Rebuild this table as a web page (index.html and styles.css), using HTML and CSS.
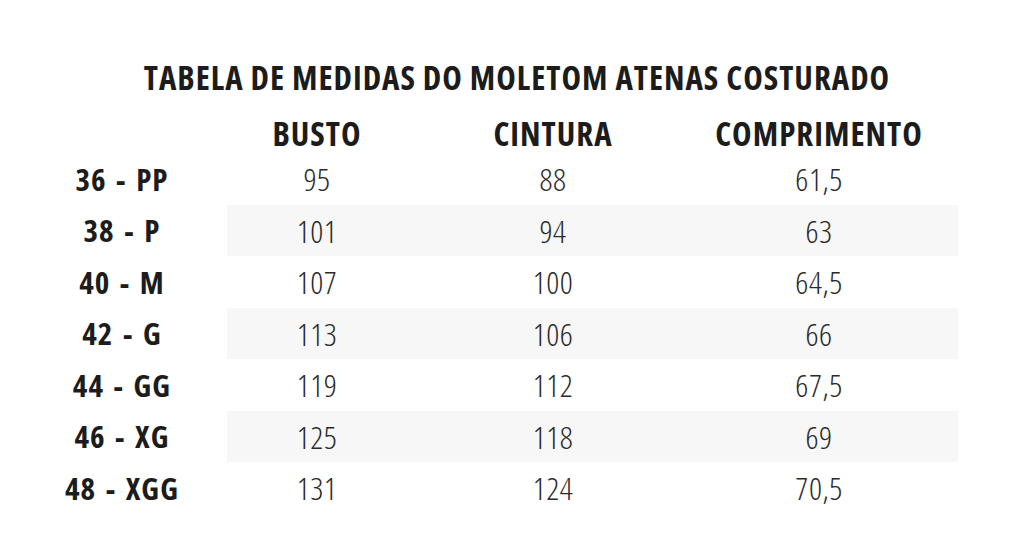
FILE: index.html
```html
<!DOCTYPE html>
<html lang="pt-BR">
<head>
<meta charset="utf-8">
<title>Tabela de medidas</title>
<link rel="stylesheet" href="styles.css">
</head>
<body>
<main class="sheet">
  <h1 class="title">TABELA DE MEDIDAS DO MOLETOM ATENAS COSTURADO</h1>
  <div class="table">
    <div class="row head">
      <div class="label"></div>
      <div class="cells">
        <div class="c1">BUSTO</div>
        <div class="c2">CINTURA</div>
        <div class="c3">COMPRIMENTO</div>
      </div>
    </div>
    <div class="row">
      <div class="label">36 - PP</div>
      <div class="cells"><div class="c1">95</div><div class="c2">88</div><div class="c3">61,5</div></div>
    </div>
    <div class="row striped">
      <div class="label">38 - P</div>
      <div class="cells"><div class="c1">101</div><div class="c2">94</div><div class="c3">63</div></div>
    </div>
    <div class="row">
      <div class="label">40 - M</div>
      <div class="cells"><div class="c1">107</div><div class="c2">100</div><div class="c3">64,5</div></div>
    </div>
    <div class="row striped">
      <div class="label">42 - G</div>
      <div class="cells"><div class="c1">113</div><div class="c2">106</div><div class="c3">66</div></div>
    </div>
    <div class="row">
      <div class="label">44 - GG</div>
      <div class="cells"><div class="c1">119</div><div class="c2">112</div><div class="c3">67,5</div></div>
    </div>
    <div class="row striped">
      <div class="label">46 - XG</div>
      <div class="cells"><div class="c1">125</div><div class="c2">118</div><div class="c3">69</div></div>
    </div>
    <div class="row">
      <div class="label">48 - XGG</div>
      <div class="cells"><div class="c1">131</div><div class="c2">124</div><div class="c3">70,5</div></div>
    </div>
  </div>
</main>
</body>
</html>
```
FILE: styles.css
```css
html, body {
  margin: 0;
  padding: 0;
  background: #ffffff;
}
body {
  width: 1024px;
  height: 552px;
  overflow: hidden;
  font-family: "Open Sans", "Noto Sans", sans-serif;
  font-stretch: 75%;
  color: #1c1c1c;
}
.sheet {
  padding-top: 58px;
}
.title {
  margin: 0;
  padding-left: 10px;
  font-size: 33px;
  line-height: 40px;
  letter-spacing: 1px;
  font-weight: 700;
  text-align: center;
  color: #1c1c1c;
}
.table {
  margin-left: 17px;
  margin-top: 13px;
}
.row {
  display: flex;
  height: 51.5px;
  align-items: stretch;
}
.row.head {
  height: 42px;
}
.label {
  width: 210px;
  font-weight: 700;
  font-size: 31px;
  letter-spacing: 1px;
  word-spacing: 3px;
  display: flex;
  align-items: center;
  justify-content: center;
  color: #1c1c1c;
}
.cells {
  display: flex;
  width: 712px;
  padding-right: 19px;
  font-size: 32px;
  letter-spacing: 0.5px;
  font-weight: 300;
  color: #2a2a2a;
}
.striped .cells {
  background: #f7f7f7;
}
.cells > div {
  display: flex;
  align-items: center;
  justify-content: center;
}
.head .cells {
  font-weight: 700;
  font-size: 33px;
  letter-spacing: 1px;
  color: #1c1c1c;
  align-items: flex-start;
}
.c1 { width: 180px; }
.c2 { width: 292px; }
.c3 { width: 240px; }
```
